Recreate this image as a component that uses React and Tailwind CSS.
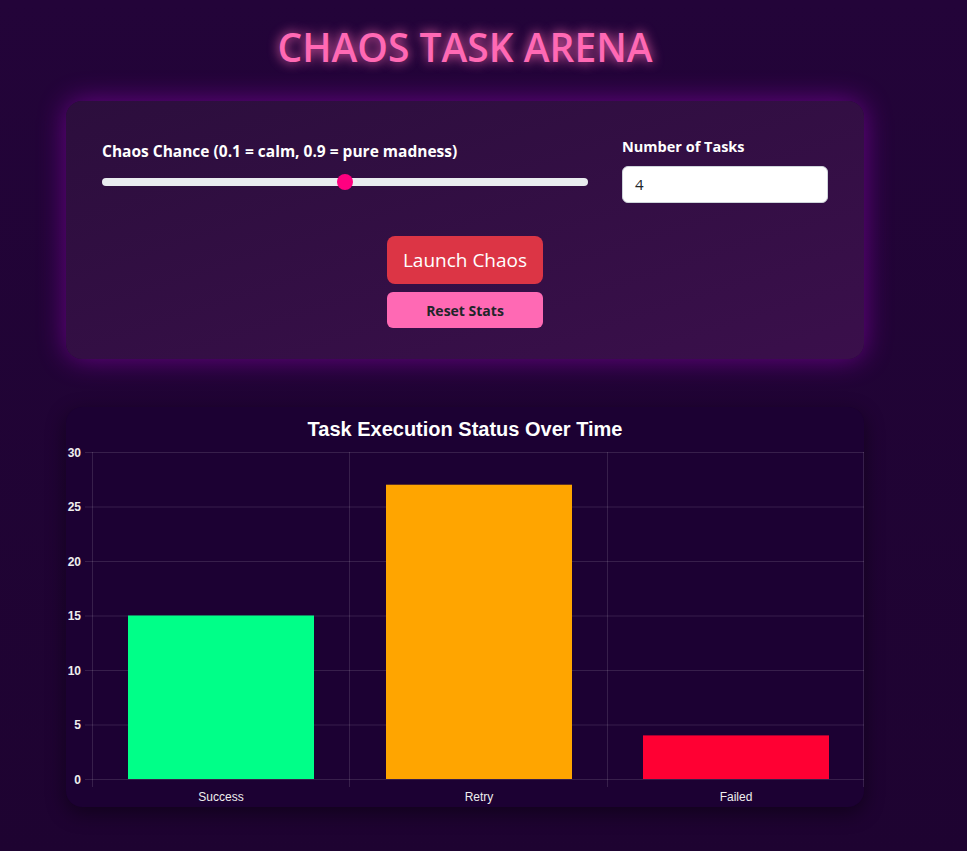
import React from 'react';

const stats = [
  { label: 'Success', value: 15, color: '#00ff88', x: 62 },
  { label: 'Retry', value: 27, color: '#ffa500', x: 320 },
  { label: 'Failed', value: 4, color: '#ff0033', x: 577 },
];

// top of plot sits 7px into the svg, zero line 327px below it
const yOf = (v) => 7 + 327 - v * (327 / 30);

const Chart = () => {
  const ticks = [0, 5, 10, 15, 20, 25, 30];
  const vlines = [26, 283, 541, 797];
  return (
    <svg width="798" height="362" className="block" style={{ fontFamily: '"Liberation Sans", Arial, sans-serif' }}>
      {ticks.map((t) => (
        <g key={t}>
          <line x1="19" x2="798" y1={yOf(t) + 0.5} y2={yOf(t) + 0.5} stroke="rgba(255,255,255,0.12)" />
          <text x="15" y={yOf(t) + 4.5} textAnchor="end" fontSize="12" fontWeight="700" fill="#eeeeee">
            {t}
          </text>
        </g>
      ))}
      {vlines.map((x) => (
        <line key={x} x1={x + 0.5} x2={x + 0.5} y1="7" y2="342" stroke="rgba(255,255,255,0.12)" />
      ))}
      {stats.map((s) => (
        <g key={s.label}>
          <rect x={s.x} y={yOf(s.value)} width="186" height={yOf(0) - yOf(s.value)} fill={s.color} />
          <text x={s.x + 93} y="356" textAnchor="middle" fontSize="12" fill="#eeeeee">
            {s.label}
          </text>
        </g>
      ))}
    </svg>
  );
};

export default function App() {
  return (
    <div className="min-h-screen w-full bg-gradient-to-b from-[#230439] to-[#1e0331] font-['Open_Sans','Noto_Sans',sans-serif]">
      <div className="w-[930px] px-[66px] pt-[22px] pb-[44px]">
        <h1 className="text-center text-[39px] leading-[50px] font-semibold text-[#ff69b4] [text-shadow:0_0_12px_#ff69b4]">
          CHAOS TASK ARENA
        </h1>

        <div className="mt-[29px] rounded-2xl bg-gradient-to-br from-[#2c0e3d] to-[#3a0f4b] px-[36px] pt-[36px] pb-[31px] shadow-[0_0_28px_rgba(190,0,230,0.45)]">
          <div className="flex gap-[34px]">
            <div className="flex-1 pt-[4px]">
              <label className="block text-[15.5px] leading-[20px] font-bold text-white">
                Chaos Chance (0.1 = calm, 0.9 = pure madness)
              </label>
              <div className="relative mt-[17px] h-2 rounded-full bg-[#e9ecef]">
                <div className="absolute left-1/2 top-1/2 h-4 w-4 -translate-x-1/2 -translate-y-1/2 rounded-full bg-[#ff0080]" />
              </div>
            </div>
            <div className="w-[206px]">
              <label className="block text-[14.5px] leading-[20px] font-bold text-white">Number of Tasks</label>
              <div className="mt-[9px] flex h-[37px] items-center rounded-md border border-[#ced4da] bg-white px-3 text-[15px] text-[#212529]">
                4
              </div>
            </div>
          </div>

          <div className="mt-[33px] flex flex-col items-center gap-2">
            <button className="h-[48px] w-[156px] rounded-lg bg-[#dc3545] text-[19px] text-white">Launch Chaos</button>
            <button className="h-[36px] w-[156px] rounded-md bg-[#ff69b4] text-[14px] font-bold text-[#212529]">
              Reset Stats
            </button>
          </div>
        </div>

        <div className="mt-[48px] overflow-hidden rounded-2xl bg-[#1c0133] shadow-[0_6px_20px_rgba(0,0,0,0.45)]">
          <div className="flex h-[38px] items-end justify-center pb-[4px] font-['Liberation_Sans',Arial,sans-serif] text-[20px] leading-[24px] font-bold text-white">
            Task Execution Status Over Time
          </div>
          <Chart />
        </div>
      </div>
    </div>
  );
}
